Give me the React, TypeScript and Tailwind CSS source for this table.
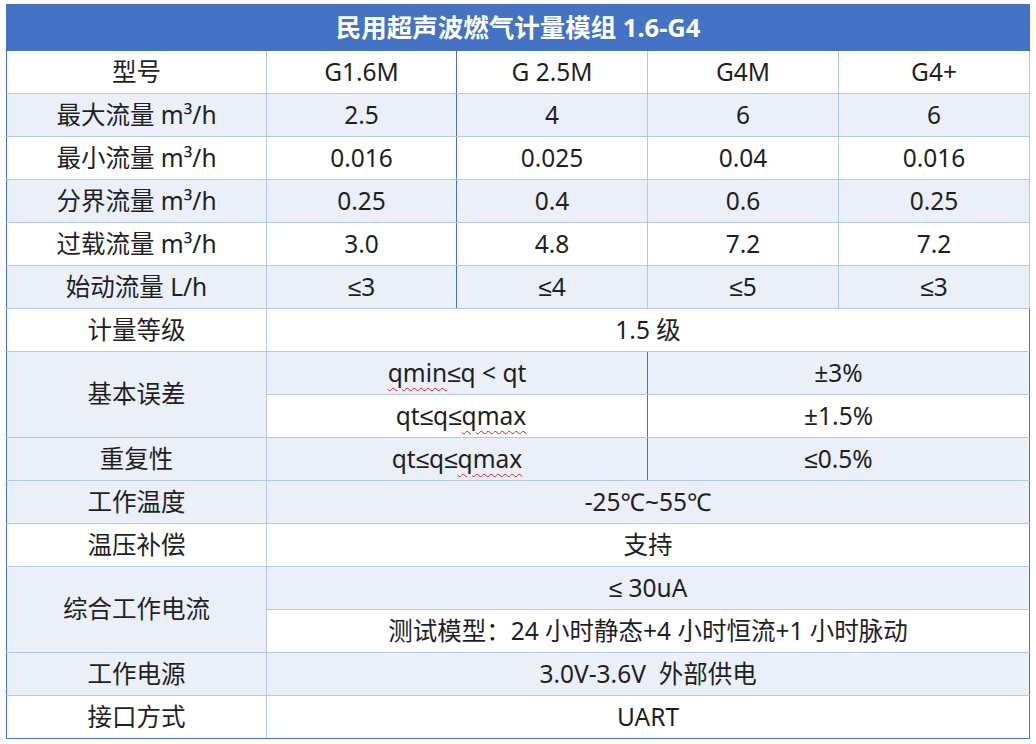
const td = "h-[43px] border border-[#b4c6e7] p-0 text-center align-middle leading-none";
const shade = "bg-[#eaeff8]";

const Wavy = ({ children }: { children: React.ReactNode }) => (
  <span className="underline decoration-wavy decoration-[#e02020] decoration-1 underline-offset-[5px]">
    {children}
  </span>
);

const flowRows = [
  { label: "最大流量 m³/h", vals: ["2.5", "4", "6", "6"] },
  { label: "最小流量 m³/h", vals: ["0.016", "0.025", "0.04", "0.016"] },
  { label: "分界流量 m³/h", vals: ["0.25", "0.4", "0.6", "0.25"] },
  { label: "过载流量 m³/h", vals: ["3.0", "4.8", "7.2", "7.2"] },
  { label: "始动流量 L/h", vals: ["≤3", "≤4", "≤5", "≤3"] },
];

export default function App() {
  return (
    <div
      className="bg-white pl-[6px] pt-[4px] text-[24.5px] text-[#1f1f1f]"
      style={{ fontFamily: '"Noto Sans", "Liberation Sans", "Noto Sans CJK SC", sans-serif' }}
    >
      <table className="w-[1023px] table-fixed border-collapse">
        <colgroup>
          <col className="w-[260px]" />
          <col className="w-[190px]" />
          <col className="w-[191px]" />
          <col className="w-[191px]" />
          <col className="w-[191px]" />
        </colgroup>
        <tbody>
          <tr>
            <td
              colSpan={5}
              className="h-[46px] border border-[#4472c4] bg-[#4472c4] p-0 text-center align-middle text-[25.5px] font-bold text-white"
            >
              民用超声波燃气计量模组 1.6-G4
            </td>
          </tr>
          <tr>
            <td className={`${td} border-l-[#4472c4]`}>型号</td>
            <td className={`${td} border-r-[#4472c4]`}>G1.6M</td>
            <td className={td}>G 2.5M</td>
            <td className={td}>G4M</td>
            <td className={td}>G4+</td>
          </tr>
          {flowRows.map((r, i) => {
            const bg = i % 2 === 0 ? shade : "bg-white";
            return (
              <tr key={r.label} className={bg}>
                <td className={`${td} border-l-[#4472c4]`}>{r.label}</td>
                <td className={`${td} border-r-[#4472c4]`}>{r.vals[0]}</td>
                <td className={td}>{r.vals[1]}</td>
                <td className={td}>{r.vals[2]}</td>
                <td className={td}>{r.vals[3]}</td>
              </tr>
            );
          })}
          <tr className="bg-white">
            <td className={`${td} border-l-[#4472c4]`}>计量等级</td>
            <td colSpan={4} className={`${td} border-r-[#4472c4]`}>1.5 级</td>
          </tr>
          <tr className={shade}>
            <td rowSpan={2} className={`${td} border-l-[#4472c4]`}>基本误差</td>
            <td colSpan={2} className={`${td} border-r-[#4472c4]`}>
              <Wavy>qmin</Wavy>≤q &lt; qt
            </td>
            <td colSpan={2} className={`${td} border-r-[#4472c4]`}>±3%</td>
          </tr>
          <tr className="bg-white">
            <td colSpan={2} className={`${td} border-r-[#4472c4] pl-2`}>
              qt≤q≤<Wavy>qmax</Wavy>
            </td>
            <td colSpan={2} className={`${td} border-r-[#4472c4]`}>±1.5%</td>
          </tr>
          <tr className={shade}>
            <td className={`${td} border-l-[#4472c4]`}>重复性</td>
            <td colSpan={2} className={`${td} border-r-[#4472c4]`}>
              qt≤q≤<Wavy>qmax</Wavy>
            </td>
            <td colSpan={2} className={`${td} border-r-[#4472c4]`}>≤0.5%</td>
          </tr>
          <tr className={shade}>
            <td className={`${td} border-l-[#4472c4]`}>工作温度</td>
            <td colSpan={4} className={`${td} border-r-[#4472c4]`}>-25℃~55℃</td>
          </tr>
          <tr className="bg-white">
            <td className={`${td} border-l-[#4472c4]`}>温压补偿</td>
            <td colSpan={4} className={`${td} border-r-[#4472c4]`}>支持</td>
          </tr>
          <tr className={shade}>
            <td rowSpan={2} className={`${td} border-l-[#4472c4]`}>综合工作电流</td>
            <td colSpan={4} className={`${td} border-r-[#4472c4]`}>≤ 30uA</td>
          </tr>
          <tr className="bg-white">
            <td colSpan={4} className={`${td} border-r-[#4472c4]`}>
              测试模型：24 小时静态+4 小时恒流+1 小时脉动
            </td>
          </tr>
          <tr className={shade}>
            <td className={`${td} border-l-[#4472c4]`}>工作电源</td>
            <td colSpan={4} className={`${td} border-r-[#4472c4] whitespace-pre`}>
              3.0V-3.6V  外部供电
            </td>
          </tr>
          <tr className="bg-white">
            <td className={`${td} border-l-[#4472c4] border-b-[#4472c4]`}>接口方式</td>
            <td colSpan={4} className={`${td} border-r-[#4472c4] border-b-[#4472c4]`}>UART</td>
          </tr>
        </tbody>
      </table>
    </div>
  );
}
